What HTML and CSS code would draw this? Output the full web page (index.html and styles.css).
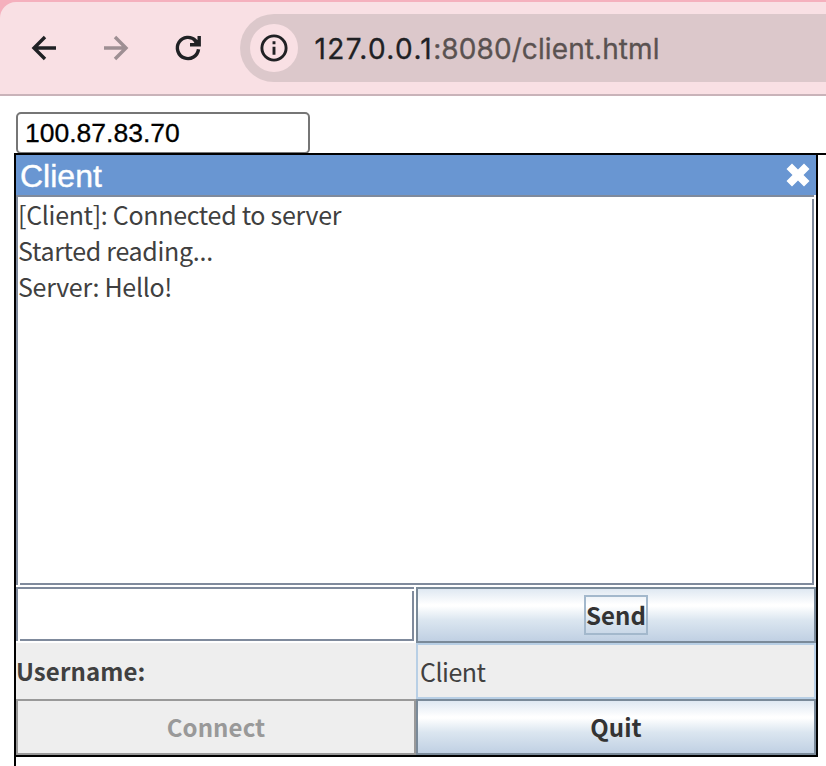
FILE: index.html
```html
<!DOCTYPE html>
<html lang="en">
<head>
<meta charset="utf-8">
<title>client.html</title>
<link rel="stylesheet" href="styles.css">
</head>
<body>
<header class="browser">
  <nav class="toolbar">
    <svg class="nav-icon" viewBox="0 0 28 28"><path d="M26 14H4M15 3 4 14l11 11" /></svg>
    <svg class="nav-icon disabled" viewBox="0 0 28 28"><path d="M2 14h22M13 3l11 11-11 11" /></svg>
    <svg class="nav-icon reload" viewBox="0 0 28 28"><path d="M24.5 15.2A10.6 10.6 0 1 1 21.6 6.6L24 9M25.2 2v8.8H16M24.5 10.4 20.5 6.4M24.5 10.4h-4.5" /></svg>
    <div class="address">
      <span class="site-info"><svg viewBox="0 0 28 28"><circle cx="14" cy="14" r="12.1"/><path d="M14 12.7v8M14 7.3v3"/></svg></span>
      <span class="url"><b>127.0.0.1</b>:8080/client.html</span>
    </div>
  </nav>
</header>
<main class="page">
  <div class="host">100.87.83.70</div>
  <section class="canvas">
    <div class="window">
      <div class="titlebar">
        <span>Client</span>
        <svg class="close" viewBox="0 0 24 24"><path d="M6 0.5 12 6.5 18 0.5 23.5 6 17.5 12 23.5 18 18 23.5 12 17.5 6 23.5 .5 18 6.5 12 .5 6Z"/></svg>
      </div>
      <div class="log etched">
        <p>[Client]: Connected to server</p>
        <p>Started reading...</p>
        <p>Server: Hello!</p>
      </div>
      <div class="form">
        <div class="message etched"></div>
        <div class="button"><span class="focus">Send</span></div>
        <div class="label">Username:</div>
        <div class="username">Client</div>
        <div class="button off">Connect</div>
        <div class="button">Quit</div>
      </div>
    </div>
  </section>
</main>
</body>
</html>
```
FILE: styles.css
```css
* { box-sizing: border-box; }
body { margin: 0; height: 766px; overflow: hidden; background: #fff; color: #404040; font-family: "Noto Sans CJK SC", sans-serif; }
.browser { height: 96px; padding-top: 2px; background: #f5b0bd; }
.toolbar { height: 94px; display: flex; align-items: center; padding-left: 30px; background: #f9e0e4; border-bottom: 2px solid #c9b3b9; border-top-left-radius: 16px; }
.nav-icon { width: 28px; height: 28px; margin-right: 44px; flex: none; fill: none; stroke: #202124; stroke-width: 3.4; }
.nav-icon.disabled { stroke: #9e8f93; }
.nav-icon.reload { margin-right: 38px; }
.address { flex: 1; height: 68px; display: flex; align-items: center; padding-left: 10px; border-radius: 34px 0 0 34px; background: #dcc8cb; }
.site-info { width: 48px; height: 48px; border-radius: 50%; background: #f9e0e4; display: flex; align-items: center; justify-content: center; }
.site-info svg { width: 28px; height: 28px; fill: none; stroke: #202124; stroke-width: 2.9; }
.url { margin-left: 16.5px; padding-top: 1px; font: 28px/40px Inter, sans-serif; letter-spacing: .1px; color: #5a5251; white-space: nowrap; -webkit-text-stroke: .3px; }
.url b { font-weight: 400; letter-spacing: 1.35px; color: #202124; }
.page { padding: 16px 0 0 14px; }
.host { width: 294px; height: 42px; margin: 0 0 -1px 2px; padding-left: 7px; border: 2px solid #767676; border-radius: 5px; background: #fff; color: #000; font: 26.5px/38px "Liberation Sans", Arial, sans-serif; -webkit-text-stroke: .3px; }
.canvas { position: relative; height: 613px; border: solid #000; border-width: 2px 0 0 2px; background: #fff; }
.window { width: 802px; height: 602px; border: solid #000; border-width: 0 2px 2px 0; }
.titlebar { height: 40px; display: flex; align-items: center; justify-content: space-between; padding: 0 6px 0 4px; background: #6996d2; color: #fff; font: 32px/40px "Liberation Sans", Arial, sans-serif; }
.titlebar span { padding-top: 2px; -webkit-text-stroke: .4px #fff; }
.close { width: 24px; height: 24px; fill: #fff; }
.etched {
  --line: linear-gradient(#7f8a9c, #7f8a9c);
  border: solid #fff;
  border-width: 0 2px 2px 0;
  background: var(--line), var(--line), var(--line), var(--line), #fff;
  background-repeat: no-repeat;
  background-size: 100% 2px, 2px 100%, 2px calc(100% - 4px), calc(100% - 4px) 2px;
  background-position: 0 0, 0 0, right 0 top 4px, left 4px bottom 0;
}
.log { height: 392px; padding: 1px 2px 2px; font-size: 25px; letter-spacing: -.31px; line-height: 36px; }
.log p { margin: 0; white-space: nowrap; }
.form { display: grid; grid-template-columns: 400px 400px; grid-auto-rows: 56px; background: #eee; font-size: 24px; letter-spacing: .1px; line-height: 36px; }
.label { display: flex; align-items: center; padding-bottom: 1px; font-weight: 700; }
.username { display: flex; align-items: center; padding: 0 0 1px 2px; border: 2px solid #b8cfe5; font-size: 25px; letter-spacing: -.5px; }
.button { display: flex; align-items: center; justify-content: center; padding-bottom: 1px; border: 2px solid #7a8a99; color: #333; font-weight: 700; background: linear-gradient(#dfe8f2, #fff 30%, #fff 33%, #dbe6f0 60%, #c0d0e3); }
.button.off { border-color: #999; background: #eee; color: #999; }
.focus { width: 64px; height: 40px; margin-bottom: -1px; padding-bottom: 1px; display: flex; align-items: center; justify-content: center; border: 2px solid #a3b8cc; }
```
